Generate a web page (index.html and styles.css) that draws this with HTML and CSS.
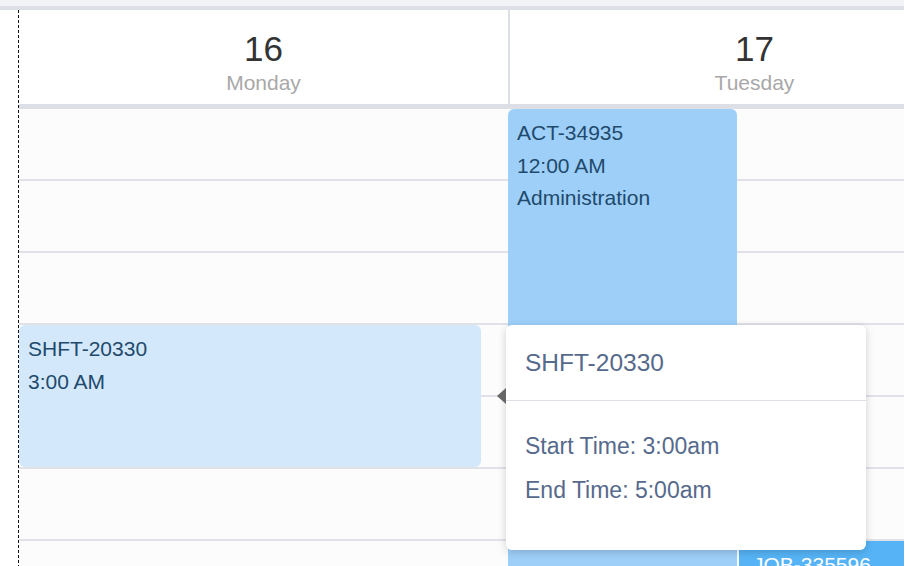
FILE: index.html
```html
<!DOCTYPE html>
<html lang="en">
<head>
    <meta charset="UTF-8">
    <meta name="viewport" content="width=device-width, initial-scale=1.0">
    <title>Week schedule</title>
    <link rel="stylesheet" href="styles.css">
</head>
<body>
    <div class="topbar"></div>
    <div class="calendar">
        <div class="gutter"></div>

        <div class="day">
            <div class="day-head">
                <div class="day-num">16</div>
                <div class="day-name">Monday</div>
            </div>
            <div class="day-body">
                <div class="slot"></div>
                <div class="slot"></div>
                <div class="slot"></div>
                <div class="slot"></div>
                <div class="slot"></div>
                <div class="slot"></div>
                <div class="slot"></div>
                <div class="slot"></div>

                <div class="event event-shift" style="top: 216px; height: 142px; width: 462px;">
                    <div>SHFT-20330</div>
                    <div>3:00 AM</div>
                </div>
            </div>
        </div>

        <div class="day">
            <div class="day-head">
                <div class="day-num">17</div>
                <div class="day-name">Tuesday</div>
            </div>
            <div class="day-body">
                <div class="slot"></div>
                <div class="slot"></div>
                <div class="slot"></div>
                <div class="slot"></div>
                <div class="slot"></div>
                <div class="slot"></div>
                <div class="slot"></div>
                <div class="slot"></div>

                <div class="event event-activity" style="top: 0px; height: 520px; width: 229px; left: -2px;">
                    <div>ACT-34935</div>
                    <div>12:00 AM</div>
                    <div>Administration</div>
                </div>

                <div class="event event-job" style="top: 432px; height: 144px; width: 300px; left: 229px;">
                    <div>JOB-335596</div>
                </div>

                <!-- popover for the hovered shift -->
                <div class="popover">
                    <span class="popover-arrow"></span>
                    <div class="popover-title">SHFT-20330</div>
                    <div class="popover-body">
                        <div>Start Time: 3:00am</div>
                        <div>End Time: 5:00am</div>
                    </div>
                </div>
            </div>
        </div>
    </div>
</body>
</html>
```

FILE: styles.css
```css
body {
    margin: 0;
    font-family: "Liberation Sans", Arial, sans-serif;
    background-color: #fff;
    overflow: hidden;
    height: 566px;
}
.topbar {
    height: 6px;
    background-color: #f2f3f7;
    border-bottom: 4px solid #dcdfe6;
}
.calendar {
    display: flex;
    height: 556px;
}
.gutter {
    flex: 0 0 19px;
    background: #fff repeating-linear-gradient(#111 0 3px, transparent 3px 5px) right top / 1px 100% no-repeat;
}
.day {
    flex: 0 0 491px;
}
.day-head {
    height: 99px;
    box-sizing: border-box;
    padding-top: 21px;
    background-color: #fff;
    border-right: 2px solid #dcdfe6;
    border-bottom: 5px solid #dcdfe6;
    text-align: center;
}
.day-num {
    font-size: 35px;
    line-height: 36px;
    color: #333;
}
.day-name {
    margin-top: 3px;
    font-size: 21px;
    line-height: 26px;
    color: #a8a8a8;
}
.day-body {
    position: relative;
    background-color: #fcfcfc;
}
.slot {
    height: 72px;
    box-sizing: border-box;
    border-bottom: 2px solid #e0e2e7;
}
.event {
    position: absolute;
    left: 0;
    box-sizing: border-box;
    padding: 8px 9px;
    border-radius: 6px;
    font-size: 21px;
    line-height: 32.5px;
    color: #1f4a6c;
}
.event-shift {
    background-color: #d3e8fb;
}
.event-activity {
    background-color: #9dcff9;
}
.event-job {
    background-color: #56b4f6;
    color: #fff;
    padding-left: 14px;
    border-radius: 0;
}
.popover {
    position: absolute;
    left: -4px;
    top: 216px;
    width: 360px;
    height: 225px;
    box-sizing: border-box;
    background-color: #fff;
    border-radius: 6px;
    box-shadow: 0 2px 8px rgba(0, 0, 0, 0.18);
    color: #566a8c;
    z-index: 5;
}
.popover-arrow {
    position: absolute;
    left: -9px;
    top: 63px;
    width: 0;
    height: 0;
    border-top: 8px solid transparent;
    border-bottom: 8px solid transparent;
    border-right: 9px solid #666;
}
.popover-title {
    height: 76px;
    box-sizing: border-box;
    padding: 0 19px;
    display: flex;
    align-items: center;
    font-size: 24.5px;
    border-bottom: 1px solid #dcdfe6;
}
.popover-body {
    padding: 24px 19px 0;
    font-size: 23px;
    line-height: 43.5px;
}
```
